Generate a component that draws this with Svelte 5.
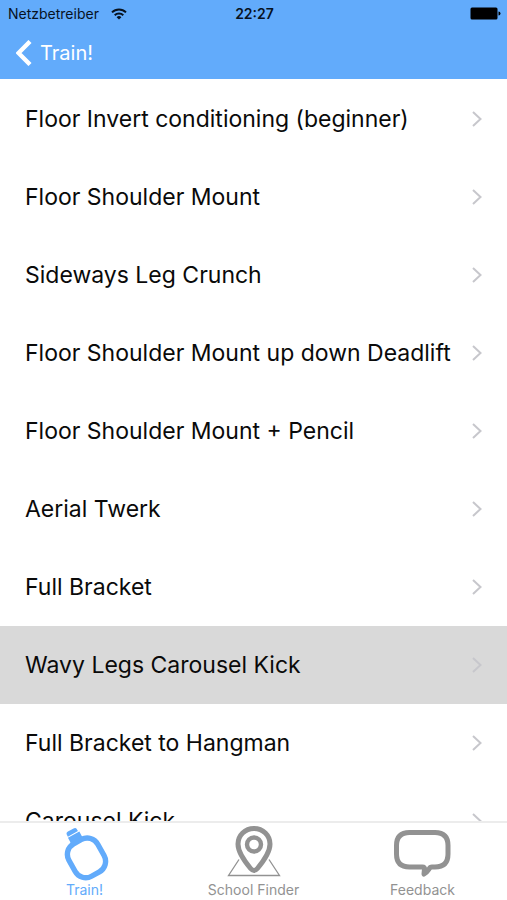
<script lang="ts">
  const exercises = [
    "Floor Invert conditioning (beginner)",
    "Floor Shoulder Mount",
    "Sideways Leg Crunch",
    "Floor Shoulder Mount up down Deadlift",
    "Floor Shoulder Mount + Pencil",
    "Aerial Twerk",
    "Full Bracket",
    "Wavy Legs Carousel Kick",
    "Full Bracket to Hangman",
    "Carousel Kick",
  ];

  let selected = $state("Wavy Legs Carousel Kick");
</script>

<div class="app">
  <header>
    <div class="status">
      <div class="carrier">
        <span>Netzbetreiber</span>
        <svg width="16" height="12" viewBox="0 0 16 12" aria-hidden="true">
          <g fill="none" stroke="#07121f" stroke-width="2">
            <path d="M1 4.4a10 10 0 0 1 14 0" />
            <path d="M3.7 7.2a6.2 6.2 0 0 1 8.6 0" />
          </g>
          <path d="M8 11.6 5.6 9.2a3.4 3.4 0 0 1 4.8 0z" fill="#07121f" />
        </svg>
      </div>
      <time>22:27</time>
      <svg class="battery" width="31" height="13" viewBox="0 0 31 13" aria-hidden="true">
        <rect x="0.5" y="0.5" width="27" height="12" rx="1.5" />
        <path d="M28.5 4.5q2 0 2 2t-2 2z" />
      </svg>
    </div>
    <a class="back" href="#train">
      <svg width="16" height="26" viewBox="0 0 16 26" aria-hidden="true">
        <path d="M14 1.5 2.5 13 14 24.5" fill="none" stroke="#fff" stroke-width="4.4" />
      </svg>
      <span>Train!</span>
    </a>
  </header>

  <main>
    <ul>
      {#each exercises as name}
        <li>
          <button class:selected={selected === name} onclick={() => (selected = name)}>
            <span>{name}</span>
            <svg width="12" height="18" viewBox="0 0 12 18" aria-hidden="true">
              <path d="M2 2l7.5 7L2 16" fill="none" stroke="currentColor" stroke-width="2" />
            </svg>
          </button>
        </li>
      {/each}
    </ul>
  </main>

  <nav>
    <a class="active" href="#train">
      <svg width="60" height="56" viewBox="0 0 60 56" aria-hidden="true">
        <g transform="rotate(-29 31 32)">
          <rect x="14.5" y="14.5" width="33" height="37" rx="12" fill="none" stroke="currentColor" stroke-width="5.4" />
          <path d="M24.5 6.5h13v5l2 4h-17l2-4z" fill="currentColor" />
          <path d="M25 5.4V3.6q0-2.6 2.5-2.6H34q2.5 0 2.500 2.6v1.800z" fill="currentColor" />
        </g>
      </svg>
      <span>Train!</span>
    </a>
    <a href="#schools">
      <svg width="60" height="56" viewBox="0 0 60 56" aria-hidden="true">
        <path d="M15 34.5 4.5 50.5h51l-10.5-16" fill="none" stroke="currentColor" stroke-width="1.3" />
        <path
          d="M30 3.5c-9 0-16 6.800-16 15.600 0 7.400 6.700 17.400 12.600 24.400q3.400 4 6.800 0C39.300 36.500 46 26.500 46 19.100 46 10.300 39 3.500 30 3.500z"
          fill="#fff"
          stroke="currentColor"
          stroke-width="5"
        />
        <circle cx="30" cy="19.5" r="7" fill="none" stroke="currentColor" stroke-width="4.4" />
      </svg>
      <span>School Finder</span>
    </a>
    <a href="#feedback">
      <svg width="60" height="56" viewBox="0 0 60 56" aria-hidden="true">
        <path
          d="M16.5 7.5H42q13 0 13 13V29q0 13-13 13h-3q-2 0-3 2-2 3-5 5l.5-5q0-2-2-2h-13q-13 0-13-13v-8.500q0-13 13-13z"
          fill="none"
          stroke="currentColor"
          stroke-width="5"
          stroke-linejoin="round"
        />
      </svg>
      <span>Feedback</span>
    </a>
  </nav>
</div>

<style>
  :global(body) {
    margin: 0;
  }

  .app {
    display: flex;
    flex-direction: column;
    height: 100vh;
    background: #fff;
    color: #0a0a0a;
    font-family: Inter, "Liberation Sans", sans-serif;
  }

  header {
    flex: none;
    background: #62abfb;
  }

  .status {
    display: grid;
    grid-template-columns: 1fr auto 1fr;
    align-items: center;
    height: 27px;
    padding: 0 6px 0 8px;
    color: #07121f;
    font-size: 14px;
  }

  .carrier {
    display: flex;
    align-items: center;
    gap: 12px;
  }

  time {
    font-weight: 600;
  }

  .battery {
    justify-self: end;
    fill: #000;
  }

  .back {
    display: inline-flex;
    align-items: center;
    gap: 8px;
    height: 52px;
    padding: 0 16px;
    box-sizing: border-box;
    color: #fff;
    font-size: 20px;
    text-decoration: none;
    vertical-align: top;
  }

  main {
    flex: 1;
    min-height: 0;
    overflow-y: auto;
    scrollbar-width: none;
  }

  ul {
    list-style: none;
    margin: 0;
    padding: 1px 0 0;
  }

  button {
    display: flex;
    align-items: center;
    justify-content: space-between;
    width: 100%;
    height: 78px;
    padding: 0 24px 0 25px;
    border: 0;
    background: none;
    color: inherit;
    font: inherit;
    font-size: 23px;
    text-align: left;
    white-space: nowrap;
  }

  button svg {
    flex: none;
    color: #c7c7cc;
  }

  button.selected {
    background: #d9d9d9;
  }

  nav {
    flex: none;
    display: grid;
    grid-template-columns: repeat(3, 1fr);
    box-sizing: border-box;
    height: 79px;
    padding-top: 2px;
    border-top: 2px solid #ececec;
    background: #fff;
  }

  nav a {
    display: flex;
    flex-direction: column;
    align-items: center;
    color: #929292;
    font-size: 14px;
    line-height: 18px;
    text-decoration: none;
  }

  nav a.active {
    color: #62abfb;
  }
</style>
